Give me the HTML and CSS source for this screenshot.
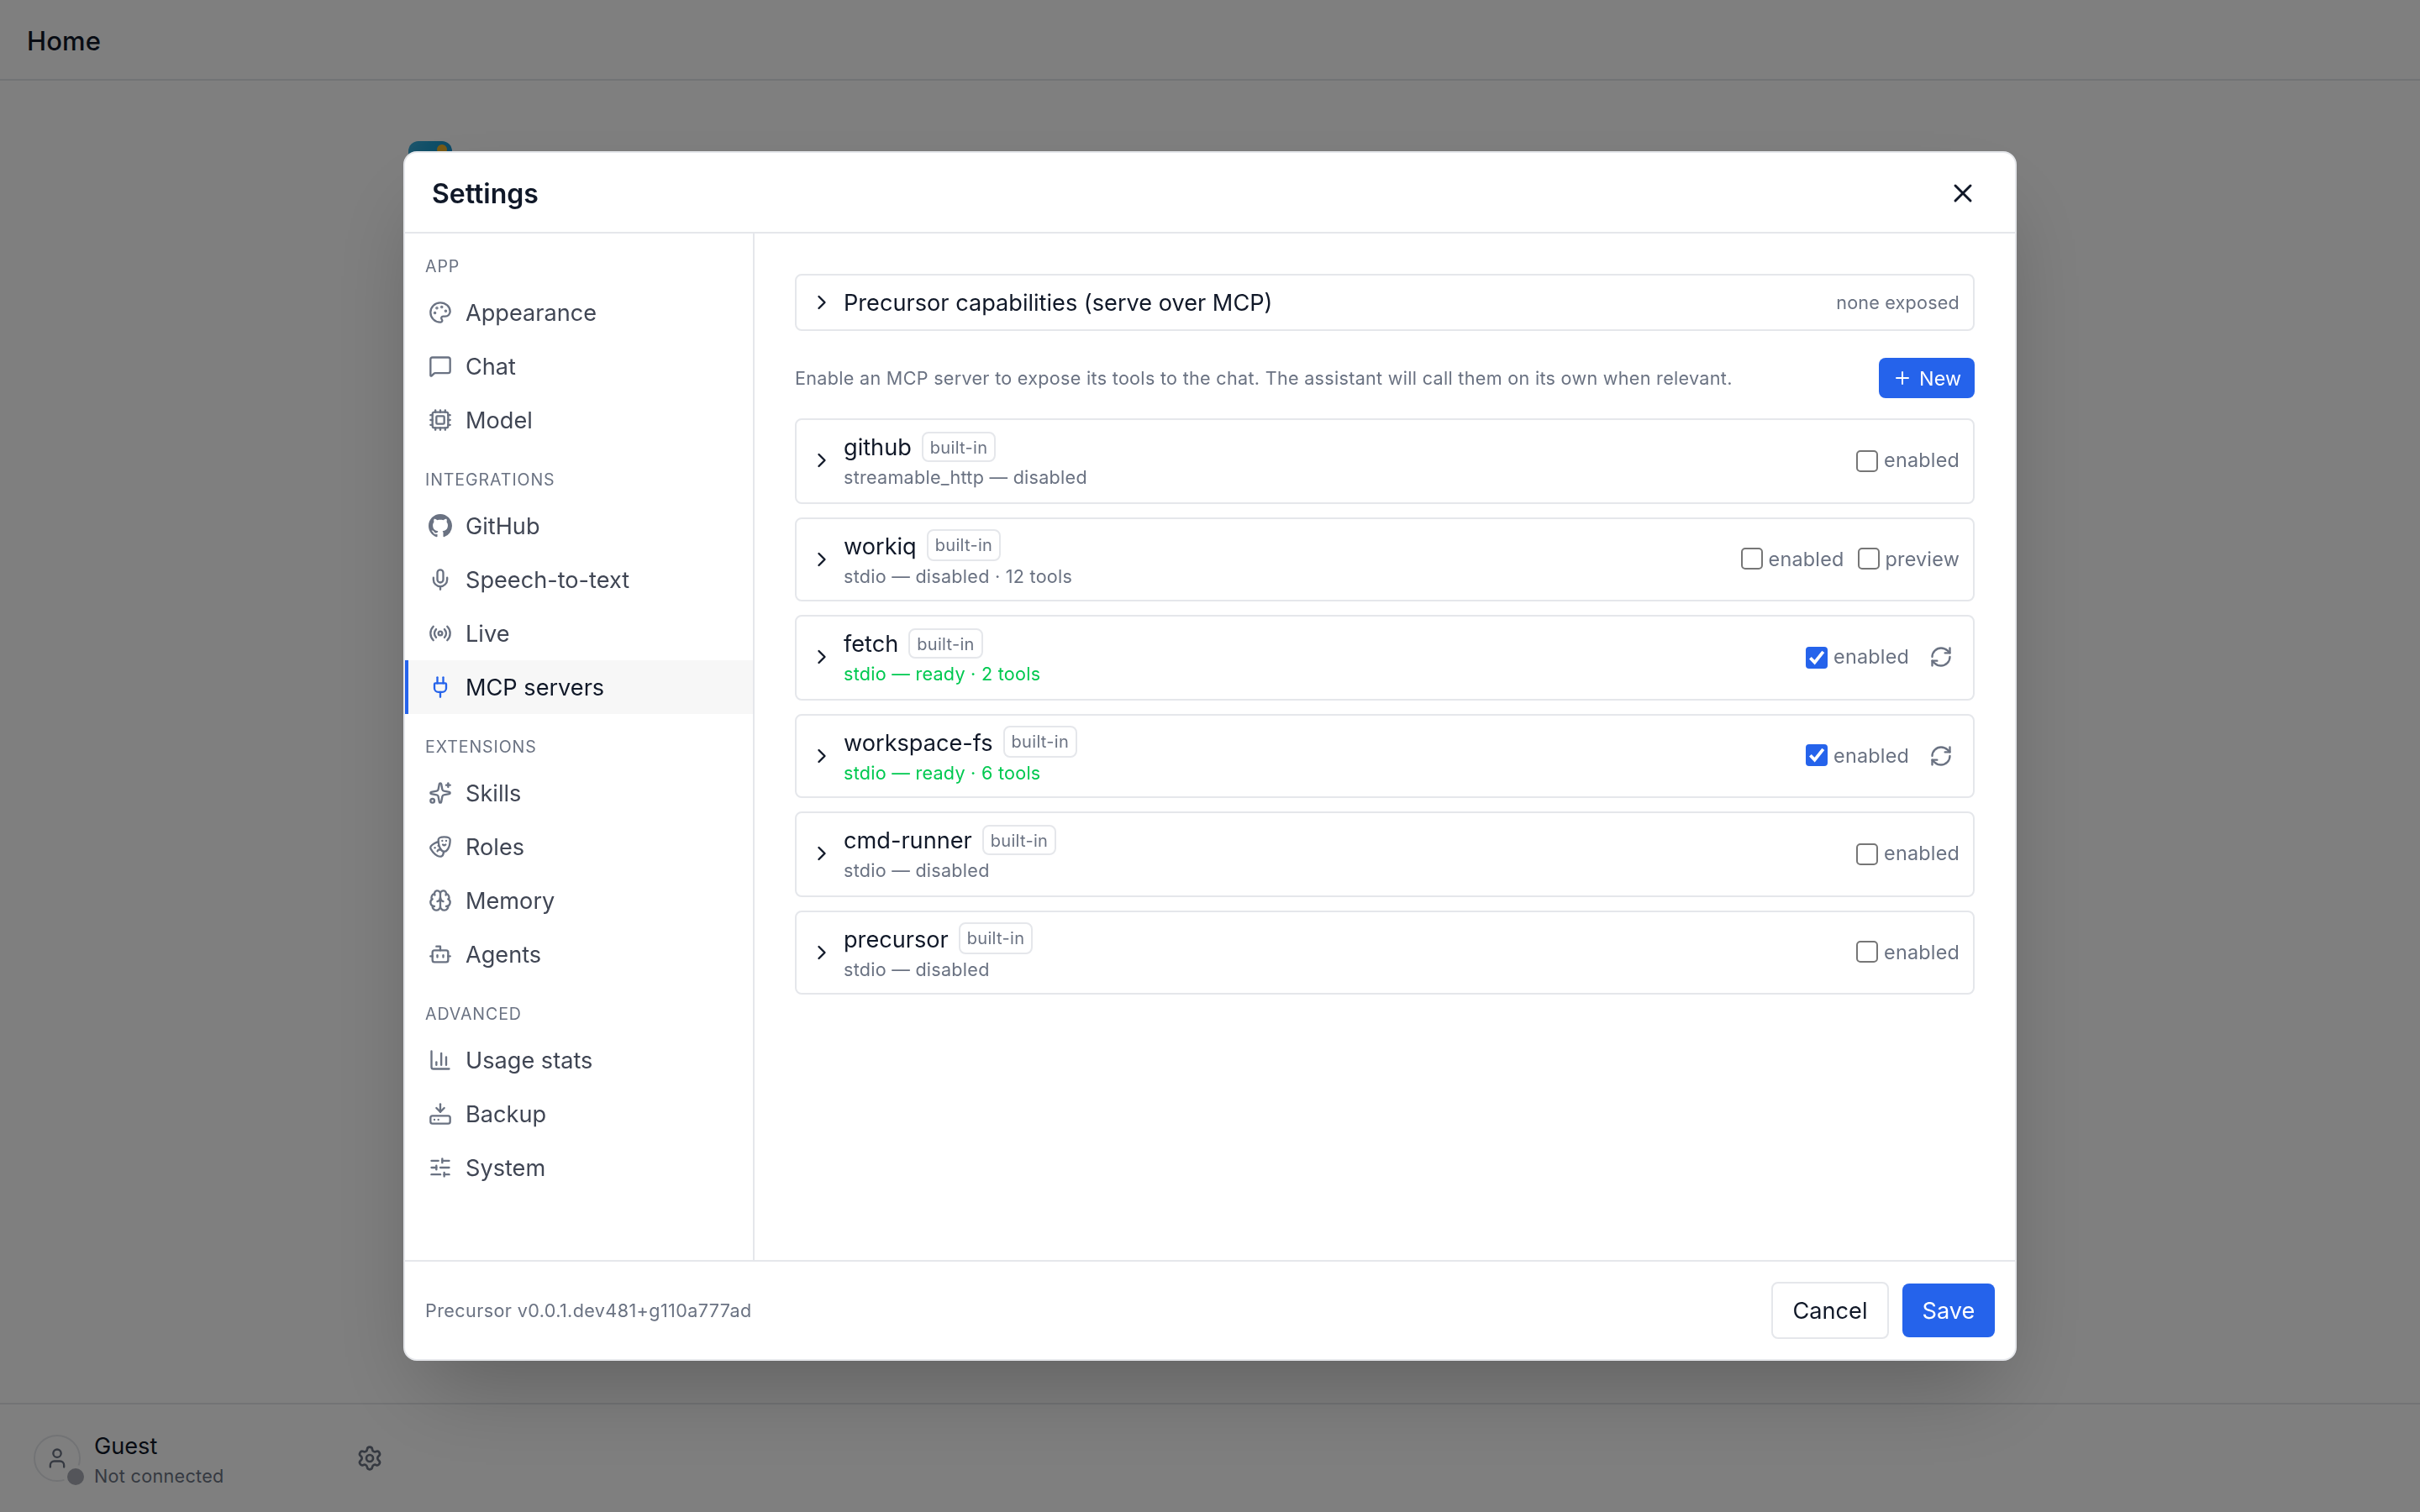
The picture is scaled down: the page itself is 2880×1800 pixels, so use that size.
FILE: index.html
```html
<!DOCTYPE html>
<html lang="en">
<head>
    <meta charset="UTF-8">
    <meta name="viewport" content="width=device-width, initial-scale=1.0">
    <title>Precursor - Settings</title>
    <link rel="stylesheet" href="styles.css">
</head>
<body>
    <div class="app">
        <header class="topbar">
            <h1>Home</h1>
        </header>
        <main class="home">
            <svg class="app-logo" viewBox="0 0 52 52">
                <defs>
                    <linearGradient id="logo-bg" x1="0" y1="0" x2="1" y2="0.4">
                        <stop offset="0" stop-color="#3cabd8"/>
                        <stop offset="0.5" stop-color="#1f9fd0"/>
                        <stop offset="1" stop-color="#1a91cc"/>
                    </linearGradient>
                </defs>
                <rect width="52" height="52" rx="12" fill="url(#logo-bg)"/>
                <circle cx="40" cy="10" r="6" fill="#f0b429"/>
            </svg>
        </main>
        <footer class="userbar">
            <div class="avatar">
                <svg class="icon" viewBox="0 0 24 24"><path d="M19 21v-2a4 4 0 0 0-4-4H9a4 4 0 0 0-4 4v2"/><circle cx="12" cy="7" r="4"/></svg>
                <span class="status-dot"></span>
            </div>
            <div class="user-info">
                <div class="user-name">Guest</div>
                <div class="user-status">Not connected</div>
            </div>
            <svg class="icon gear" viewBox="0 0 24 24"><path d="M9.671 4.136a2.34 2.34 0 0 1 4.659 0 2.34 2.34 0 0 0 3.319 1.915 2.34 2.34 0 0 1 2.33 4.033 2.34 2.34 0 0 0 0 3.831 2.34 2.34 0 0 1-2.33 4.033 2.34 2.34 0 0 0-3.319 1.915 2.34 2.34 0 0 1-4.659 0 2.34 2.34 0 0 0-3.32-1.915 2.34 2.34 0 0 1-2.33-4.033 2.34 2.34 0 0 0 0-3.831A2.34 2.34 0 0 1 6.35 6.051a2.34 2.34 0 0 0 3.319-1.915"/><circle cx="12" cy="12" r="3"/></svg>
        </footer>
    </div>

    <div class="overlay">
        <div class="modal">
            <div class="modal-header">
                <h2>Settings</h2>
                <button class="close-btn">
                    <svg class="icon" viewBox="0 0 24 24"><path d="M18 6 6 18"/><path d="m6 6 12 12"/></svg>
                </button>
            </div>

            <div class="modal-body">
                <nav class="sidebar">
                    <div class="nav-label">APP</div>
                    <a class="nav-item">
                        <svg class="icon" viewBox="0 0 24 24"><path d="M12 22a1 1 0 0 1 0-20 10 9 0 0 1 10 9 5 5 0 0 1-5 5h-2.25a1.75 1.75 0 0 0-1.4 2.8l.3.4a1.75 1.75 0 0 1-1.4 2.8z"/><circle cx="13.5" cy="6.5" r=".5" fill="currentColor"/><circle cx="17.5" cy="10.5" r=".5" fill="currentColor"/><circle cx="6.5" cy="12.5" r=".5" fill="currentColor"/><circle cx="8.5" cy="7.5" r=".5" fill="currentColor"/></svg>
                        Appearance
                    </a>
                    <a class="nav-item">
                        <svg class="icon" viewBox="0 0 24 24"><path d="M22 17a2 2 0 0 1-2 2H6.828a2 2 0 0 0-1.414.586l-2.202 2.202A.71.71 0 0 1 2 21.286V5a2 2 0 0 1 2-2h16a2 2 0 0 1 2 2z"/></svg>
                        Chat
                    </a>
                    <a class="nav-item">
                        <svg class="icon" viewBox="0 0 24 24"><path d="M12 20v2M12 2v2M17 20v2M17 2v2M2 12h2M2 17h2M2 7h2M20 12h2M20 17h2M20 7h2M7 20v2M7 2v2"/><rect x="4" y="4" width="16" height="16" rx="2"/><rect x="8" y="8" width="8" height="8" rx="1"/></svg>
                        Model
                    </a>

                    <div class="nav-label">INTEGRATIONS</div>
                    <a class="nav-item">
                        <svg class="icon icon-solid" viewBox="0 0 16 16"><path d="M8 0C3.58 0 0 3.58 0 8c0 3.54 2.29 6.53 5.47 7.59.4.07.55-.17.55-.38 0-.19-.01-.82-.01-1.49-2.01.37-2.53-.49-2.69-.94-.09-.23-.48-.94-.82-1.13-.28-.15-.68-.52-.01-.53.63-.01 1.08.58 1.23.82.72 1.21 1.87.87 2.33.66.07-.52.28-.87.51-1.07-1.78-.2-3.64-.89-3.64-3.95 0-.87.31-1.59.82-2.15-.08-.2-.36-1.02.08-2.12 0 0 .67-.21 2.2.82.64-.18 1.32-.27 2-.27s1.36.09 2 .27c1.53-1.04 2.2-.82 2.2-.82.44 1.1.16 1.92.08 2.12.51.56.82 1.27.82 2.15 0 3.07-1.87 3.75-3.65 3.95.29.25.54.73.54 1.48 0 1.07-.01 1.93-.01 2.2 0 .21.15.46.55.38A8.01 8.01 0 0 0 16 8c0-4.42-3.58-8-8-8z"/></svg>
                        GitHub
                    </a>
                    <a class="nav-item">
                        <svg class="icon" viewBox="0 0 24 24"><path d="M12 19v3"/><path d="M19 10v2a7 7 0 0 1-14 0v-2"/><rect x="9" y="2" width="6" height="13" rx="3"/></svg>
                        Speech-to-text
                    </a>
                    <a class="nav-item">
                        <svg class="icon" viewBox="0 0 24 24"><path d="M16.247 7.761a6 6 0 0 1 0 8.478"/><path d="M19.075 4.933a10 10 0 0 1 0 14.134"/><path d="M4.925 19.067a10 10 0 0 1 0-14.134"/><path d="M7.753 16.239a6 6 0 0 1 0-8.478"/><circle cx="12" cy="12" r="2"/></svg>
                        Live
                    </a>
                    <a class="nav-item active">
                        <svg class="icon" viewBox="0 0 24 24"><path d="M12 22v-5"/><path d="M15 8V2"/><path d="M17 8a1 1 0 0 1 1 1v4a4 4 0 0 1-4 4h-4a4 4 0 0 1-4-4V9a1 1 0 0 1 1-1z"/><path d="M9 8V2"/></svg>
                        MCP servers
                    </a>

                    <div class="nav-label">EXTENSIONS</div>
                    <a class="nav-item">
                        <svg class="icon" viewBox="0 0 24 24"><path d="M11.017 2.814a1 1 0 0 1 1.966 0l1.051 5.558a2 2 0 0 0 1.594 1.594l5.558 1.051a1 1 0 0 1 0 1.966l-5.558 1.051a2 2 0 0 0-1.594 1.594l-1.051 5.558a1 1 0 0 1-1.966 0l-1.051-5.558a2 2 0 0 0-1.594-1.594l-5.558-1.051a1 1 0 0 1 0-1.966l5.558-1.051a2 2 0 0 0 1.594-1.594z"/><path d="M20 2v4"/><path d="M22 4h-4"/><circle cx="4" cy="20" r="2"/></svg>
                        Skills
                    </a>
                    <a class="nav-item">
                        <svg class="icon" viewBox="0 0 24 24"><path d="M10 11h.01"/><path d="M14 6h.01"/><path d="M18 6h.01"/><path d="M6.5 13.1h.01"/><path d="M22 5c0 9-4 12-6 12s-6-3-6-12c0-2 2-3 6-3s6 1 6 3"/><path d="M17.4 9.9c-.8.8-2 .8-2.8 0"/><path d="M10.1 7.1C9 7.2 7.7 7.7 6 8.6c-3.5 2-4.7 3.9-3.7 5.6 4.5 7.8 9.5 8.4 11.2 7.4.9-.5 1.9-2.1 1.9-4.7"/><path d="M9.1 16.5c.3-1.1 1.4-1.7 2.4-1.4"/></svg>
                        Roles
                    </a>
                    <a class="nav-item">
                        <svg class="icon" viewBox="0 0 24 24"><path d="M12 18V5"/><path d="M15 13a4.17 4.17 0 0 1-3-4 4.17 4.17 0 0 1-3 4"/><path d="M17.598 6.5A3 3 0 1 0 12 5a3 3 0 1 0-5.598 1.5"/><path d="M17.997 5.125a4 4 0 0 1 2.526 5.77"/><path d="M18 18a4 4 0 0 0 2-7.464"/><path d="M19.967 17.483A4 4 0 1 1 12 18a4 4 0 1 1-7.967-.517"/><path d="M6 18a4 4 0 0 1-2-7.464"/><path d="M6.003 5.125a4 4 0 0 0-2.526 5.77"/></svg>
                        Memory
                    </a>
                    <a class="nav-item">
                        <svg class="icon" viewBox="0 0 24 24"><path d="M12 8V4H8"/><rect x="4" y="8" width="16" height="12" rx="2"/><path d="M2 14h2"/><path d="M20 14h2"/><path d="M15 13v2"/><path d="M9 13v2"/></svg>
                        Agents
                    </a>

                    <div class="nav-label">ADVANCED</div>
                    <a class="nav-item">
                        <svg class="icon" viewBox="0 0 24 24"><path d="M3 3v16a2 2 0 0 0 2 2h16"/><path d="M18 17V9"/><path d="M13 17V5"/><path d="M8 17v-3"/></svg>
                        Usage stats
                    </a>
                    <a class="nav-item">
                        <svg class="icon" viewBox="0 0 24 24"><path d="M12 2v8"/><path d="m16 6-4 4-4-4"/><rect x="2" y="14" width="20" height="8" rx="2"/><path d="M6 18h.01"/><path d="M10 18h.01"/></svg>
                        Backup
                    </a>
                    <a class="nav-item">
                        <svg class="icon" viewBox="0 0 24 24"><path d="M10 5H3"/><path d="M12 19H3"/><path d="M14 3v4"/><path d="M16 17v4"/><path d="M21 12h-9"/><path d="M21 19h-5"/><path d="M21 5h-7"/><path d="M8 10v4"/><path d="M8 12H3"/></svg>
                        System
                    </a>
                </nav>

                <section class="content">
                    <div class="capabilities">
                        <svg class="icon chevron" viewBox="0 0 24 24"><path d="m9 18 6-6-6-6"/></svg>
                        <span class="capabilities-title">Precursor capabilities (serve over MCP)</span>
                        <span class="capabilities-note">none exposed</span>
                    </div>

                    <div class="intro">
                        <p>Enable an MCP server to expose its tools to the chat. The assistant will call them on its own when relevant.</p>
                        <button class="new-btn">
                            <svg class="icon" viewBox="0 0 24 24"><path d="M5 12h14"/><path d="M12 5v14"/></svg>
                            New
                        </button>
                    </div>

                    <div class="server-list">
                        <div class="server">
                            <svg class="icon chevron" viewBox="0 0 24 24"><path d="m9 18 6-6-6-6"/></svg>
                            <div class="server-info">
                                <div class="server-name">github <span class="badge">built-in</span></div>
                                <div class="server-meta">streamable_http — disabled</div>
                            </div>
                            <label class="toggle"><input type="checkbox">enabled</label>
                        </div>
                        <div class="server">
                            <svg class="icon chevron" viewBox="0 0 24 24"><path d="m9 18 6-6-6-6"/></svg>
                            <div class="server-info">
                                <div class="server-name">workiq <span class="badge">built-in</span></div>
                                <div class="server-meta">stdio — disabled · 12 tools</div>
                            </div>
                            <label class="toggle"><input type="checkbox">enabled</label>
                            <label class="toggle"><input type="checkbox">preview</label>
                        </div>
                        <div class="server">
                            <svg class="icon chevron" viewBox="0 0 24 24"><path d="m9 18 6-6-6-6"/></svg>
                            <div class="server-info">
                                <div class="server-name">fetch <span class="badge">built-in</span></div>
                                <div class="server-meta ready">stdio — ready · 2 tools</div>
                            </div>
                            <label class="toggle"><input type="checkbox" checked>enabled</label>
                            <button class="refresh-btn">
                                <svg class="icon" viewBox="0 0 24 24"><path d="M3 12a9 9 0 0 1 9-9 9.75 9.75 0 0 1 6.74 2.74L21 8"/><path d="M21 3v5h-5"/><path d="M21 12a9 9 0 0 1-9 9 9.75 9.75 0 0 1-6.74-2.74L3 16"/><path d="M8 16H3v5"/></svg>
                            </button>
                        </div>
                        <div class="server">
                            <svg class="icon chevron" viewBox="0 0 24 24"><path d="m9 18 6-6-6-6"/></svg>
                            <div class="server-info">
                                <div class="server-name">workspace-fs <span class="badge">built-in</span></div>
                                <div class="server-meta ready">stdio — ready · 6 tools</div>
                            </div>
                            <label class="toggle"><input type="checkbox" checked>enabled</label>
                            <button class="refresh-btn">
                                <svg class="icon" viewBox="0 0 24 24"><path d="M3 12a9 9 0 0 1 9-9 9.75 9.75 0 0 1 6.74 2.74L21 8"/><path d="M21 3v5h-5"/><path d="M21 12a9 9 0 0 1-9 9 9.75 9.75 0 0 1-6.74-2.74L3 16"/><path d="M8 16H3v5"/></svg>
                            </button>
                        </div>
                        <div class="server">
                            <svg class="icon chevron" viewBox="0 0 24 24"><path d="m9 18 6-6-6-6"/></svg>
                            <div class="server-info">
                                <div class="server-name">cmd-runner <span class="badge">built-in</span></div>
                                <div class="server-meta">stdio — disabled</div>
                            </div>
                            <label class="toggle"><input type="checkbox">enabled</label>
                        </div>
                        <div class="server">
                            <svg class="icon chevron" viewBox="0 0 24 24"><path d="m9 18 6-6-6-6"/></svg>
                            <div class="server-info">
                                <div class="server-name">precursor <span class="badge">built-in</span></div>
                                <div class="server-meta">stdio — disabled</div>
                            </div>
                            <label class="toggle"><input type="checkbox">enabled</label>
                        </div>
                    </div>
                </section>
            </div>

            <div class="modal-footer">
                <span class="version">Precursor v0.0.1.dev481+g110a777ad</span>
                <button class="btn cancel-btn">Cancel</button>
                <button class="btn save-btn">Save</button>
            </div>
        </div>
    </div>
</body>
</html>
```
FILE: styles.css
```css
* {
    box-sizing: border-box;
    margin: 0;
    padding: 0;
}

body {
    font-family: Inter, "Liberation Sans", sans-serif;
    font-size: 27.15px;
    color: #101828;
    background: #fff;
    height: 100vh;
    overflow: hidden;
}

button {
    font-family: inherit;
    border: none;
    background: none;
    cursor: pointer;
}

.icon {
    width: 28px;
    height: 28px;
    flex-shrink: 0;
    fill: none;
    stroke: currentColor;
    stroke-width: 2;
    stroke-linecap: round;
    stroke-linejoin: round;
}

.icon-solid {
    fill: currentColor;
    stroke: none;
}

/* page behind the dialog */
.app {
    display: flex;
    flex-direction: column;
    height: 100vh;
}

.topbar {
    display: flex;
    align-items: center;
    height: 96px;
    padding: 2px 32px 0;
    border-bottom: 2px solid #e5e7eb;
}

.topbar h1 {
    font-size: 31px;
    font-weight: 500;
    letter-spacing: 0.1px;
}

.home {
    flex: 1;
    width: 1908px;
    margin: 0 auto;
    padding-top: 72px;
}

.app-logo {
    display: block;
    width: 52px;
    height: 52px;
}

.userbar {
    display: flex;
    align-items: center;
    height: 130px;
    padding: 0 40px;
    border-top: 2px solid #e5e7eb;
}

.avatar {
    position: relative;
    display: flex;
    align-items: center;
    justify-content: center;
    width: 56px;
    height: 56px;
    border: 2px solid #e5e7eb;
    border-radius: 50%;
    color: #6a7282;
}

.status-dot {
    position: absolute;
    right: -6px;
    bottom: -6px;
    width: 20px;
    height: 20px;
    border-radius: 50%;
    background: #a8abb5;
    box-shadow: 0 0 0 4px #fff;
}

.user-info {
    width: 312px;
    margin-left: 16px;
    padding-top: 4px;
}

.user-name {
    line-height: 38px;
}

.user-status {
    font-size: 21.6px;
    line-height: 33px;
    letter-spacing: 0.3px;
    color: #6a7282;
}

.gear {
    width: 32px;
    height: 32px;
    color: #6a7282;
}

/* dialog */
.overlay {
    position: fixed;
    inset: 0;
    display: flex;
    align-items: center;
    justify-content: center;
    background: rgba(0, 0, 0, 0.5);
}

.modal {
    display: flex;
    flex-direction: column;
    width: 1920px;
    height: 1440px;
    background: #fff;
    border: 2px solid #e5e7eb;
    border-radius: 16px;
    overflow: hidden;
    box-shadow: 0 50px 100px -24px rgba(0, 0, 0, 0.25);
}

.modal-header {
    display: flex;
    align-items: center;
    justify-content: space-between;
    height: 96px;
    padding: 2px 36px 0 32px;
    border-bottom: 2px solid #e5e7eb;
}

.modal-header h2 {
    padding-top: 1px;
    font-size: 32px;
    font-weight: 600;
}

.close-btn {
    display: flex;
    padding: 8px;
    color: #101828;
}

.close-btn .icon {
    width: 36px;
    height: 36px;
}

.modal-body {
    flex: 1;
    display: flex;
    min-height: 0;
}

.sidebar {
    width: 416px;
    border-right: 2px solid #e5e7eb;
}

.nav-label {
    padding: 24px 24px 8px;
    font-size: 19.6px;
    line-height: 30px;
    letter-spacing: 0.9px;
    color: #6a7282;
}

.nav-item {
    display: flex;
    align-items: center;
    gap: 16px;
    height: 64px;
    padding-left: 24px;
    border-left: 4px solid transparent;
    color: #404654;
}

.nav-item .icon {
    color: #6a7282;
}

.nav-item.active {
    background: #f7f7f7;
    border-left-color: #2563eb;
    color: #101828;
}

.nav-item.active .icon {
    color: #2563eb;
}

.content {
    flex: 1;
    padding: 48px;
}

.capabilities {
    display: flex;
    align-items: center;
    gap: 12px;
    height: 68px;
    padding: 0 16px;
    border: 2px solid #e5e7eb;
    border-radius: 8px;
}

.capabilities-title {
    flex: 1;
}

.capabilities-note {
    font-size: 21.6px;
    letter-spacing: 0.2px;
    color: #6a7282;
}

.intro {
    display: flex;
    align-items: center;
    justify-content: space-between;
    margin: 32px 0 24px;
}

.intro p {
    font-size: 21.6px;
    letter-spacing: 0.29px;
    color: #6a7282;
}

.new-btn {
    display: flex;
    align-items: center;
    gap: 8px;
    width: 114px;
    height: 48px;
    padding-left: 16px;
    border-radius: 8px;
    background: #2563eb;
    color: #fff;
    font-size: 23.3px;
    letter-spacing: 0.2px;
}

.new-btn .icon {
    width: 24px;
    height: 24px;
}

.server-list {
    display: flex;
    flex-direction: column;
    gap: 16px;
}

.server {
    display: flex;
    align-items: center;
    gap: 16px;
    height: 102px;
    padding: 12px 16px 14px;
    border: 2px solid #e5e7eb;
    border-radius: 8px;
}

.server:nth-child(even) {
    height: 100px;
    padding-bottom: 12px;
}

.server .chevron {
    margin-right: -4px;
}

.server-info {
    flex: 1;
    padding-top: 3px;
}

.server-name {
    display: flex;
    align-items: flex-start;
    gap: 12px;
    height: 38px;
    line-height: 39px;
}

.badge {
    height: 36px;
    margin-top: 1px;
    padding: 0 8px;
    border: 2px solid #e5e7eb;
    border-radius: 8px;
    font-size: 20px;
    line-height: 34px;
    letter-spacing: 0.3px;
    color: #6a7282;
}

.server:nth-child(even) .badge {
    height: 38px;
    margin-top: -1px;
}

.server-meta {
    font-size: 21.6px;
    line-height: 35px;
    letter-spacing: 0.25px;
    color: #6a7282;
}

.server-meta.ready {
    color: #00c950;
}

.toggle {
    display: flex;
    align-items: center;
    gap: 7px;
    height: 30px;
    line-height: 28px;
    font-size: 23.4px;
    letter-spacing: 0.2px;
    color: #6a7282;
}

.toggle input {
    appearance: none;
    width: 26px;
    height: 26px;
    margin-top: 2px;
    border: 2px solid #767676;
    border-radius: 5px;
    background: #fff;
}

.server:nth-child(even) .toggle input {
    margin: 0 0 2px;
}

.toggle input:checked {
    border: none;
    border-radius: 4px;
    background: #2563eb url("data:image/svg+xml,%3Csvg xmlns='http://www.w3.org/2000/svg' viewBox='0 0 26 26'%3E%3Cpath d='M5.4 13.2l5.2 5.4L20.8 5.9' fill='none' stroke='white' stroke-width='3.8'/%3E%3C/svg%3E") center / 26px 26px;
}

.refresh-btn {
    display: flex;
    padding: 8px;
    color: #6a7282;
}

.modal-footer {
    display: flex;
    align-items: center;
    gap: 16px;
    height: 118px;
    padding: 0 24px;
    border-top: 2px solid #e5e7eb;
}

.version {
    flex: 1;
    font-size: 21.6px;
    letter-spacing: 0.38px;
    color: #6a7282;
}

.btn {
    width: 110px;
    height: 64px;
    border-radius: 8px;
    font-size: 27.15px;
}

.cancel-btn {
    width: 140px;
    height: 68px;
    border: 2px solid #e5e7eb;
    color: #101828;
}

.save-btn {
    background: #2563eb;
    color: #fff;
}
```
